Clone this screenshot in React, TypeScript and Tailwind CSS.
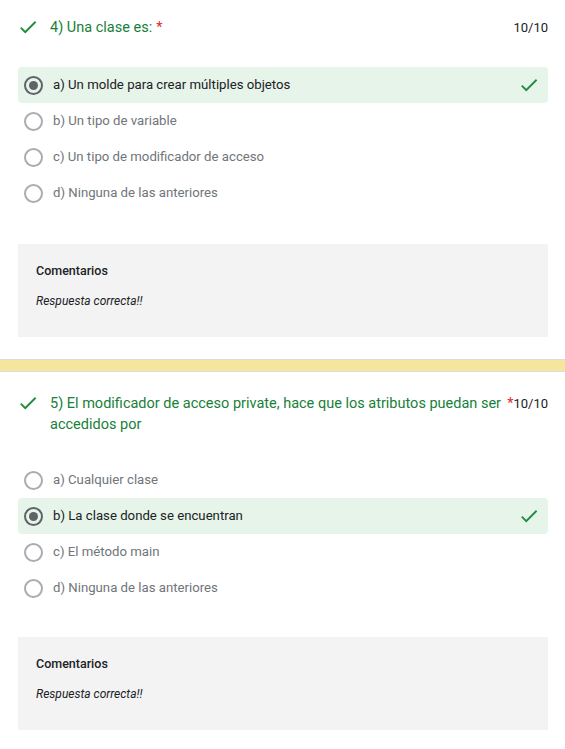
import React from "react";

type Q = {
  title: string;
  options: string[];
  selected: number;
  pt: string;
  gap: string;
  boxGap: string;
};

const QUESTIONS: Q[] = [
  {
    title: "4) Una clase es:",
    options: [
      "a) Un molde para crear múltiples objetos",
      "b) Un tipo de variable",
      "c) Un tipo de modificador de acceso",
      "d) Ninguna de las anteriores",
    ],
    selected: 0,
    pt: "pt-[17px]",
    gap: "mt-[29px]",
    boxGap: "mt-[33px]",
  },
  {
    title:
      "5) El modificador de acceso private, hace que los atributos puedan ser accedidos por",
    options: [
      "a) Cualquier clase",
      "b) La clase donde se encuentran",
      "c) El método main",
      "d) Ninguna de las anteriores",
    ],
    selected: 1,
    pt: "pt-[21px]",
    gap: "mt-[27px]",
    boxGap: "mt-[31px]",
  },
];

function Check({ className }: { className?: string }) {
  return (
    <svg viewBox="0 0 24 24" className={className} fill="#1e8e3e">
      <path d="M9 16.17L4.83 12l-1.42 1.41L9 19 21 7l-1.41-1.41z" />
    </svg>
  );
}

function Radio({ checked }: { checked: boolean }) {
  return checked ? (
    <span className="flex h-[19px] w-[19px] shrink-0 items-center justify-center rounded-full border-2 border-[#5f6368]">
      <span className="h-[9px] w-[9px] rounded-full bg-[#5f6368]" />
    </span>
  ) : (
    <span className="h-[19px] w-[19px] shrink-0 rounded-full border-2 border-[#a9adb1]" />
  );
}

function Question({ q }: { q: Q }) {
  return (
    <div className={`px-[18px] pr-[17px] ${q.pt}`}>
      <div className="flex items-start">
        <Check className="ml-[-1px] mt-[-1px] h-[22px] w-[22px] shrink-0" />
        <div className="ml-[11px] flex min-w-0 flex-1 items-start">
          <div className="flex min-w-0 items-start">
            <div className="min-w-0 text-[14.5px] leading-[21px] text-[#188038]">
              {q.title}
            </div>
            <span className="ml-[4px] shrink-0 text-[14.5px] leading-[21px] text-[#d93025]">*</span>
          </div>
          <span className="ml-auto shrink-0 text-[13px] leading-[21px] text-[#202124]">
            10/10
          </span>
        </div>
      </div>

      <div className={q.gap}>
        {q.options.map((o, i) => {
          const sel = i === q.selected;
          return (
            <div
              key={o}
              className={`flex h-9 items-center rounded-[4px] pl-[6px] pr-[8px] ${
                sel ? "bg-[#e6f4ea]" : ""
              }`}
            >
              <Radio checked={sel} />
              <span
                className={`ml-[10px] text-[13.2px] ${
                  sel ? "text-[#202124]" : "text-[#70757a]"
                }`}
              >
                {o}
              </span>
              {sel && <Check className="ml-auto h-[22px] w-[22px]" />}
            </div>
          );
        })}
      </div>

      <div className={`${q.boxGap} bg-[#f3f3f3] px-[18px] pb-[28px] pt-[19px]`}>
        <div className="text-[12.5px] font-medium leading-4 text-[#202124]">Comentarios</div>
        <div className="mt-[14px] text-[12px] italic leading-4 text-[#202124]">
          Respuesta correcta!!
        </div>
      </div>
    </div>
  );
}

export default function App() {
  return (
    <div className="min-h-[749px] w-[565px] bg-white font-['Roboto',sans-serif]">
      <Question q={QUESTIONS[0]} />
      <div className="mt-[22px] h-[13px] border-y border-[#dadce0] bg-[#f6e69d]" />
      <Question q={QUESTIONS[1]} />
    </div>
  );
}
